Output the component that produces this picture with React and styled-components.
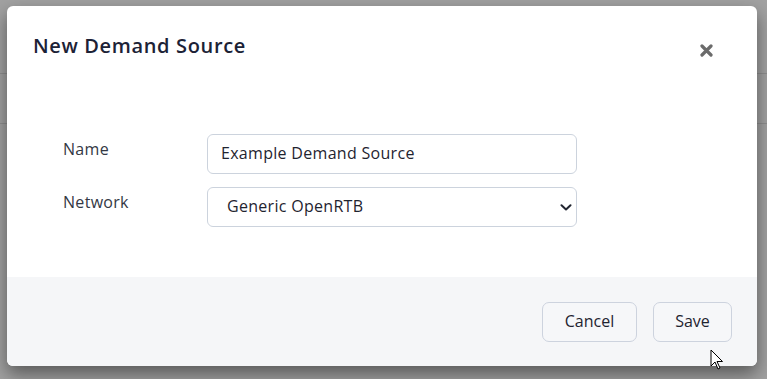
import React from "react";
import styled, { createGlobalStyle } from "styled-components";

const GlobalStyle = createGlobalStyle`
  html, body {
    margin: 0;
    padding: 0;
    background: #a1a1a1;
    font-family: "Open Sans", "Lato", sans-serif;
  }
`;

const Backdrop = styled.div`
  position: relative;
  box-sizing: border-box;
  height: 379px;
  padding: 6px 0 0 7px;
  overflow: hidden;
  background:
    linear-gradient(#8e8e8e, #8e8e8e) 0 73px / 100% 1px no-repeat,
    linear-gradient(#8e8e8e, #8e8e8e) 0 123px / 100% 1px no-repeat,
    #a1a1a1;
`;

const Modal = styled.div`
  width: 750px;
  height: 360px;
  display: flex;
  flex-direction: column;
  background: #ffffff;
  border-radius: 6px;
  overflow: hidden;
  box-shadow: 0 8px 18px rgba(0, 0, 0, 0.45);
`;

const Header = styled.div`
  display: flex;
  justify-content: space-between;
  align-items: flex-start;
  padding: 28px 44px 0 26px;
`;

const Title = styled.h4`
  margin: 0;
  font-size: 20px;
  line-height: 24px;
  font-weight: 600;
  color: #1c2236;
  letter-spacing: 0.65px;
`;

const CloseButton = styled.button`
  border: 0;
  padding: 0;
  margin-top: 10px;
  background: none;
  width: 13px;
  height: 13px;
  cursor: pointer;
  svg {
    display: block;
  }
`;

const Body = styled.div`
  flex: 1;
  padding: 76px 0 0 56px;
`;

const Form = styled.div`
  display: grid;
  grid-template-columns: 144px 370px;
  row-gap: 13px;
  align-items: center;
`;

const Label = styled.label`
  font-size: 16px;
  letter-spacing: 0.3px;
  color: #333844;
  margin-top: -11px;
`;

const fieldBase = `
  box-sizing: border-box;
  width: 370px;
  height: 40px;
  border: 1px solid #ccd3dd;
  border-radius: 6px;
  background: #fff;
  font-family: "Open Sans", "Lato", sans-serif;
  font-size: 16px;
  letter-spacing: 0.3px;
  color: #1f2430;
  outline: none;
`;

const Input = styled.input`
  ${fieldBase}
  padding: 0 13px 3px;
`;

const SelectWrap = styled.div`
  position: relative;
  width: 370px;
`;

const Select = styled.select`
  ${fieldBase}
  appearance: none;
  padding: 0 36px 3px 19px;
`;

const Chevron = styled.svg`
  position: absolute;
  right: 5px;
  top: 17px;
  pointer-events: none;
`;

const Footer = styled.div`
  height: 89px;
  box-sizing: border-box;
  display: flex;
  justify-content: flex-end;
  align-items: center;
  gap: 16px;
  padding: 0 25px;
  background: #f5f6f8;
`;

const Button = styled.button`
  box-sizing: border-box;
  height: 40px;
  width: ${(p) => p.$width}px;
  padding: 0 0 2px;
  border: 1px solid #cdd3de;
  border-radius: 7px;
  background: #f6f7f9;
  font-family: "Open Sans", "Lato", sans-serif;
  font-size: 16px;
  color: #1f2430;
  cursor: pointer;
`;

const Pointer = styled.svg`
  position: absolute;
  left: 710px;
  top: 349px;
`;

const App = () => {
  return (
    <>
      <GlobalStyle />
      <Backdrop>
        <Modal>
          <Header>
            <Title>New Demand Source</Title>
            <CloseButton aria-label="Close">
              <svg width="13" height="13" viewBox="0 0 13 13">
                <path
                  d="M2 2 L11 11 M11 2 L2 11"
                  stroke="#6b6b6b"
                  strokeWidth="3.2"
                  strokeLinecap="round"
                />
              </svg>
            </CloseButton>
          </Header>
          <Body>
            <Form>
              <Label>Name</Label>
              <Input defaultValue="Example Demand Source" />
              <Label>Network</Label>
              <SelectWrap>
                <Select defaultValue="openrtb">
                  <option value="openrtb">Generic OpenRTB</option>
                </Select>
                <Chevron width="12" height="7" viewBox="0 0 12 7">
                  <path
                    d="M1.5 1.2 L6 5.5 L10.5 1.2"
                    fill="none"
                    stroke="#222631"
                    strokeWidth="2"
                    strokeLinecap="round"
                    strokeLinejoin="round"
                  />
                </Chevron>
              </SelectWrap>
            </Form>
          </Body>
          <Footer>
            <Button $width={95}>Cancel</Button>
            <Button $width={79}>Save</Button>
          </Footer>
        </Modal>
        <Pointer width="14" height="22" viewBox="0 0 14 22">
          <path
            d="M1 1 L1 17 L5 13 L8 20 L10 19 L7 12.5 L12.5 12.5 Z"
            fill="#fff"
            stroke="#000"
            strokeWidth="1"
          />
        </Pointer>
      </Backdrop>
    </>
  );
};

export default App;
